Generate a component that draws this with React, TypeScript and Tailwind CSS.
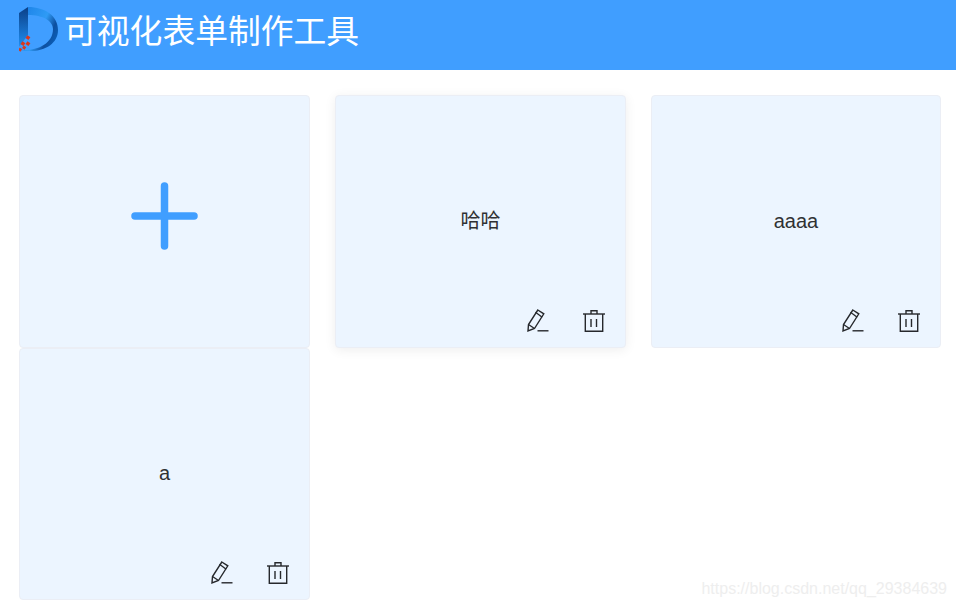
const forms = ["哈哈", "aaaa", "a"];

const Logo = () => (
  <svg width="40" height="45" viewBox="0 0 40 45" className="mb-[6px] shrink-0">
    <defs>
      <linearGradient id="logoArc" x1="0" y1="0" x2="1" y2="0.6">
        <stop offset="0" stopColor="#1a7fe6" />
        <stop offset="0.6" stopColor="#2f9bf5" />
        <stop offset="0.85" stopColor="#0d4f9f" />
        <stop offset="1" stopColor="#0b5cb4" />
      </linearGradient>
      <linearGradient id="logoBar" x1="0" y1="0" x2="0" y2="1">
        <stop offset="0" stopColor="#0b3f86" />
        <stop offset="1" stopColor="#1e8ef2" />
      </linearGradient>
    </defs>
    <path d="M9 0C26 0 39 9 39 23C39 36 27 44 11 44C7 44 4 44 2 43C18 44 34 37 34 22C34 14 24 8 9 8Z" fill="url(#logoArc)" />
    <path d="M0 6L9 0V28L0 40Z" fill="url(#logoBar)" />
    <g fill="#d9381e">
      <rect x="7" y="29" width="3.5" height="3.5" transform="rotate(35 9 31)" />
      <rect x="2" y="35" width="3.5" height="3.5" transform="rotate(35 4 37)" />
      <rect x="7" y="35" width="3.5" height="3.5" transform="rotate(35 9 37)" />
      <rect x="4" y="39" width="3" height="3" transform="rotate(35 5 40)" />
      <rect x="0" y="41" width="3" height="3" transform="rotate(35 1 42)" />
    </g>
  </svg>
);

const EditIcon = () => (
  <svg width="22" height="24" viewBox="0 0 22 24" fill="none" stroke="#26282c" strokeWidth="1.4">
    <path d="M10.8 1L16.8 4.8L7.5 19.5L1 22L1.5 15.5Z" />
    <path d="M8.5 3.2L15.2 8.2" />
    <path d="M1.5 15.5L7.5 19.5" />
    <path d="M10.5 21.8H21.5" />
  </svg>
);

const TrashIcon = () => (
  <svg width="22" height="24" viewBox="0 0 22 24" fill="none" stroke="#26282c" strokeWidth="1.4">
    <path d="M0 5H22" />
    <path d="M8 5V1.8H14V5" />
    <path d="M2.3 5V22.3H19.7V5" />
    <path d="M8 10V18" />
    <path d="M13.5 10V18" />
  </svg>
);

const Card = ({ name, raised }: { name: string; raised?: boolean }) => (
  <div
    className={`relative flex h-[252.5px] items-center justify-center rounded border border-[#ebeef5] bg-[#ecf5ff] pb-[1px] text-[20px] text-[#303133] ${
      raised ? "shadow-[0_2px_12px_0_rgba(0,0,0,0.07)]" : ""
    }`}
  >
    {name}
    <div className="absolute right-[20.5px] bottom-[14px] flex gap-[34px]">
      <EditIcon />
      <TrashIcon />
    </div>
  </div>
);

export default function App() {
  return (
    <div className="relative h-[609px] overflow-hidden bg-white font-['Liberation_Sans','Noto_Sans_CJK_SC',sans-serif]">
      <header className="flex h-[70px] items-center bg-[#409eff] pb-[6px] pl-[19px]">
        <Logo />
        <h1 className="ml-[5px] text-[32.8px] leading-none font-normal text-white">可视化表单制作工具</h1>
      </header>

      <div className="grid grid-cols-[291px_291px_290px] gap-x-[25px] pt-[25px] pl-[19px]">
        <div className="flex h-[252.5px] items-center justify-center rounded border border-[#ebeef5] bg-[#ecf5ff] pb-[11px]">
          <svg width="68" height="68" viewBox="0 0 68 68" stroke="#409eff" strokeWidth="7.5" strokeLinecap="round">
            <path d="M33.5 4V64" />
            <path d="M4 34H63" />
          </svg>
        </div>
        {forms.map((name, i) => (
          <Card key={name} name={name} raised={i === 0} />
        ))}
      </div>

      {/* csdn watermark */}
      <span className="absolute right-[9px] bottom-[8px] text-[16px] text-[#eeeeee]">https://blog.csdn.net/qq_29384639</span>
    </div>
  );
}
